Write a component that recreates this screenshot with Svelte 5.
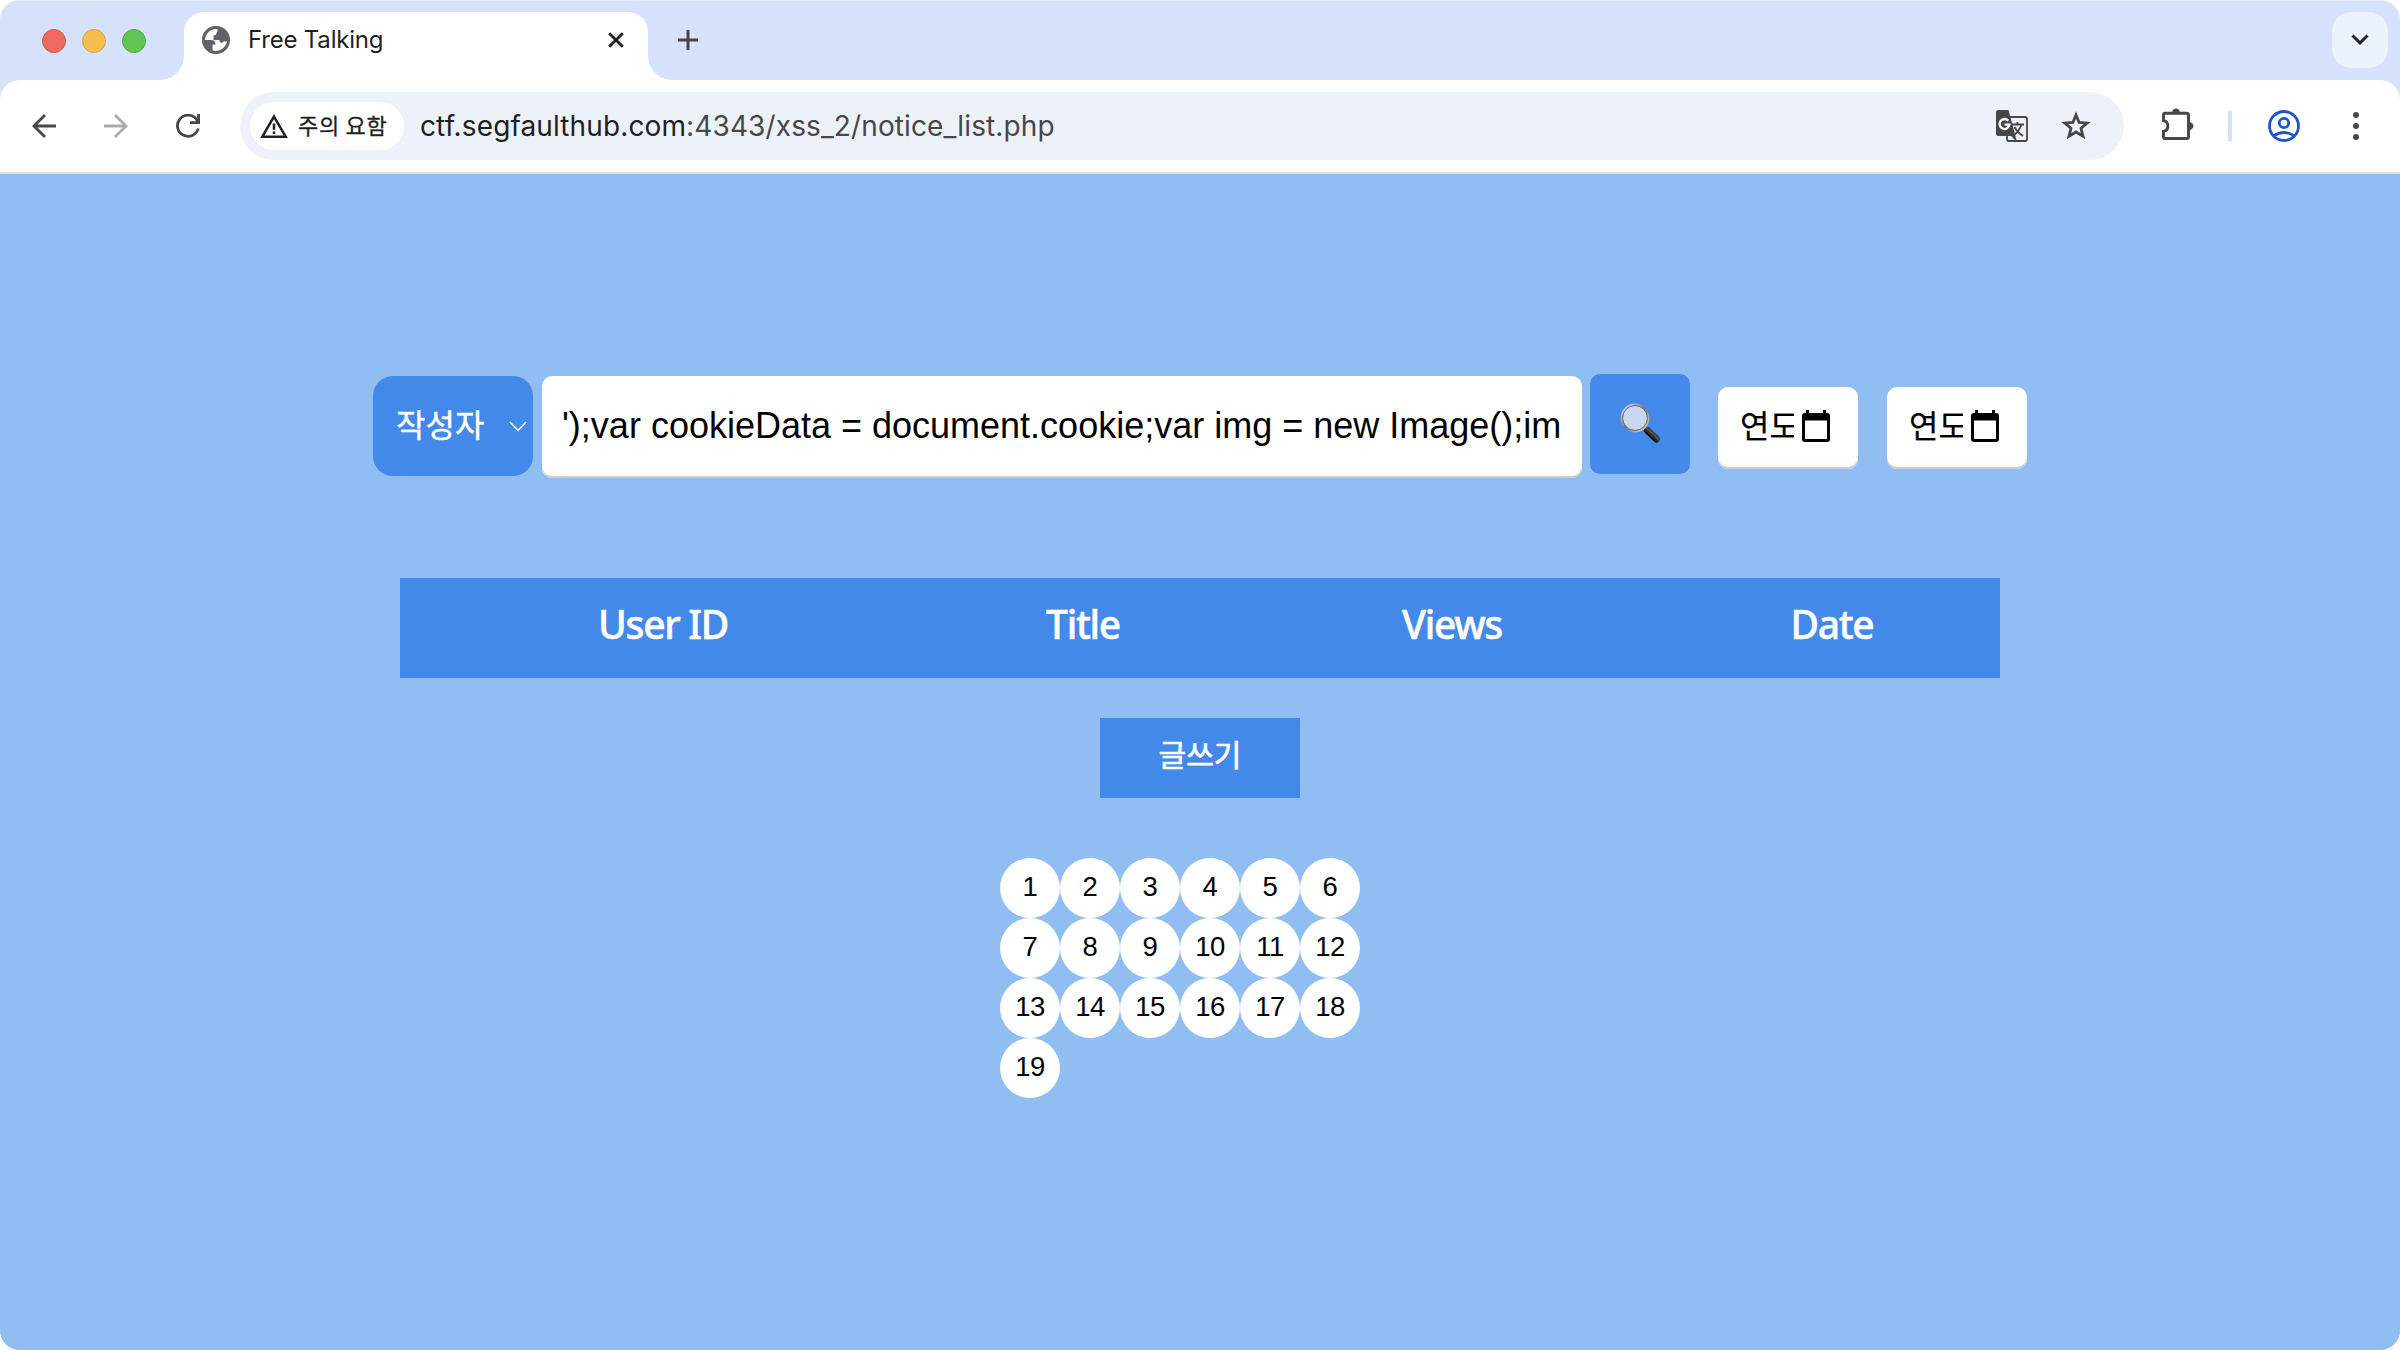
<script>
  const pages = Array.from({ length: 19 }, (_, i) => i + 1);
  const columns = ['User ID', 'Title', 'Views', 'Date'];
  const query = "');var cookieData = document.cookie;var img = new Image();im";
</script>

<div class="window">
  <header class="tabs">
    <div class="lights"><i class="red"></i><i class="yellow"></i><i class="green"></i></div>
    <div class="tab">
      <svg class="globe" viewBox="0 0 28 28" width="28" height="28">
        <circle cx="14" cy="14" r="14" fill="#5f6368" />
        <path d="M15.500 3C9.500 2.300 4.300 6.300 3.200 12.300L3 14H9Q13.500 14 13.500 18.500H10.500V24.600C17.500 26.300 24 21.500 25 15.500H21.500Q20 18 17.500 15.500V14H11.500V10.500Q11.500 8.800 14 8.800Q14.500 6 15.500 5.200Z" fill="#fff" />
      </svg>
      <span class="tab-title">Free Talking</span>
      <svg class="close" viewBox="0 0 16 16" width="16" height="16"><path d="M1.200 1.200 14.800 14.800M14.800 1.200 1.200 14.800" stroke="#1f1f1f" stroke-width="2.800" /></svg>
    </div>
    <svg class="plus" viewBox="0 0 20 20" width="20" height="20"><path d="M10 0V20M0 10H20" stroke="#474747" stroke-width="3" /></svg>
    <div class="tab-menu">
      <svg viewBox="0 0 18 12" width="18" height="12"><path d="M1.500 1.500 9 9 16.500 1.500" fill="none" stroke="#1f1f1f" stroke-width="3" /></svg>
    </div>
  </header>

  <nav class="toolbar">
    <svg class="back" viewBox="0 0 24 24" width="24" height="24"><path d="M24 12H2M13 1 2 12 13 23" fill="none" stroke="#474747" stroke-width="2.800" /></svg>
    <svg class="forward" viewBox="0 0 24 24" width="24" height="24"><path d="M0 12H22M11 1 22 12 11 23" fill="none" stroke="#ababab" stroke-width="2.800" /></svg>
    <svg class="reload" viewBox="0 0 24 24" width="24" height="24"><path d="M22.300 14.500A10.600 10.600 0 1 1 20.500 5.300L22.500 7.700" fill="none" stroke="#474747" stroke-width="2.800" /><path d="M22.600 0V8.600H14" fill="none" stroke="#474747" stroke-width="2.800" /></svg>
    <div class="omnibox">
      <div class="chip">
        <svg viewBox="0 0 28 24" width="28" height="24"><path d="M14 2.600 25.700 22.700H2.300Z" fill="none" stroke="#1f1f1f" stroke-width="2.500" /><path d="M14 9.500V15.700M14 17.500V20" stroke="#1f1f1f" stroke-width="2.500" /></svg>
        <span>주의 요함</span>
      </div>
      <span class="url"><b>ctf.segfaulthub.com</b>:4343/xss_2/notice_list.php</span>
      <svg class="translate" viewBox="0 0 32 32" width="32" height="32">
        <rect x="11" y="7" width="20" height="24" rx="2" fill="none" stroke="#474747" stroke-width="1.800" />
        <path d="M2.500 0H12.500L21 32L15 26H2.500A2.500 2.500 0 0 1 0 23.500V2.500A2.500 2.500 0 0 1 2.500 0Z" fill="#474747" />
        <path d="M12.300 10.700A5 5 0 1 0 13.500 14.700H8.600" fill="none" stroke="#fff" stroke-width="2.300" />
        <path d="M16 14.500H28M21.500 12V14.500M25.500 14.500Q23 21.500 18 25M18.500 17Q21 22 27 26" fill="none" stroke="#474747" stroke-width="1.800" />
      </svg>
      <svg class="star" viewBox="0 0 30 30" width="30" height="30"><path d="M15 4 18.100 11.500 26.200 12.100 20 17.300 22 25.300 15 21 8 25.300 10 17.300 3.800 12.100 11.900 11.500Z" fill="none" stroke="#474747" stroke-width="2.800" /></svg>
    </div>
    <svg class="puzzle" viewBox="0 0 32 32" width="32" height="32"><path d="M3 5.300H25A1.500 1.500 0 0 1 26.500 6.800V29A1.500 1.500 0 0 1 25 30.500H3A1.500 1.500 0 0 1 1.500 29V23.300A5.400 5.400 0 0 0 1.500 12.700V6.800A1.500 1.500 0 0 1 3 5.300Z" fill="none" stroke="#474747" stroke-width="2.900" /><path d="M10 5A4 4.500 0 0 1 18 5ZM27 14A4.500 4 0 0 1 27 22Z" fill="#474747" /></svg>
    <i class="divider"></i>
    <svg class="person" viewBox="0 0 32 32" width="32" height="32" fill="none" stroke="#1f55c8" stroke-width="2.800"><circle cx="16" cy="16" r="14.500" /><circle cx="16" cy="13" r="4.700" /><path d="M5.500 26Q16 19 26.500 26" /></svg>
    <div class="dots"><i></i><i></i><i></i></div>
  </nav>

  <main>
    <form class="search" onsubmit={(e) => e.preventDefault()}>
      <div class="select"><span>작성자</span><svg viewBox="0 0 18 11" width="18" height="11"><path d="M1 1 9 9.500 17 1" fill="none" stroke="#fff" stroke-width="1.500" /></svg></div>
      <div class="query"><span>{query}</span></div>
      <button class="go" aria-label="Search">
        <svg viewBox="0 0 42 42" width="42" height="42">
          <defs>
            <linearGradient id="rim" x1="0" y1="0" x2="1" y2="1"><stop offset="0" stop-color="#e8e8e8" /><stop offset=".5" stop-color="#777" /><stop offset="1" stop-color="#ddd" /></linearGradient>
            <linearGradient id="handle" x1="0" y1="1" x2="1" y2="0"><stop offset=".25" stop-color="#000" /><stop offset=".6" stop-color="#555" /><stop offset="1" stop-color="#111" /></linearGradient>
          </defs>
          <path d="M22.500 23.500 27 28" stroke="#777" stroke-width="4" />
          <path d="M27.500 27.500 36.500 36" stroke="url(#handle)" stroke-width="7" stroke-linecap="round" />
          <circle cx="15" cy="15" r="13.300" fill="#c8d8f1" stroke="url(#rim)" stroke-width="2.200" />
          <circle cx="15" cy="15" r="12.400" fill="none" stroke="#555" stroke-width=".8" />
        </svg>
      </button>
      {#each [0, 1] as field (field)}
        <div class="date">
          <span>연도</span>
          <svg viewBox="0 0 30 32" width="30" height="32"><path d="M4 3H26A3 3 0 0 1 29 6V29A3 3 0 0 1 26 32H4A3 3 0 0 1 1 29V6A3 3 0 0 1 4 3ZM4 10.500V29H26V10.500Z" fill="#000" fill-rule="evenodd" /><path d="M6.500 0V5M23.500 0V5" stroke="#000" stroke-width="3" /></svg>
        </div>
      {/each}
    </form>

    <div class="table">
      {#each columns as column}<div class="th">{column}</div>{/each}
    </div>
    <button class="write">글쓰기</button>
    <div class="pages">
      {#each pages as page}<span>{page}</span>{/each}
    </div>
  </main>
</div>

<style>
  :global(body) { background: #fff; }
  * { box-sizing: border-box; }
  svg, i { display: block; flex: none; }
  button { border: 0; padding: 0; font: inherit; }
  .window {
    width: 2400px; height: 1350px; display: flex; flex-direction: column; overflow: hidden;
    border-radius: 20px; background: #d6e1fb; font-family: Inter, "Noto Sans CJK KR", sans-serif; white-space: nowrap;
  }
  .tabs { height: 80px; flex: none; display: flex; align-items: flex-start; padding: 12px 12px 0 42px; box-shadow: inset 0 1px #eaf0fc; }
  .lights { display: flex; gap: 16px; padding-top: 17px; width: 142px; }
  .lights i { width: 24px; height: 24px; border-radius: 50%; border: 1px solid #d5574e; background: #ec6a5e; }
  .lights .yellow { background: #f4bf4f; border-color: #d8a243; }
  .lights .green { background: #61c554; border-color: #51a73f; }
  .tab { position: relative; width: 464px; height: 68px; background: #fff; border-radius: 20px 20px 0 0; display: flex; align-items: center; padding: 0 24px 12px 18px; }
  .tab::before, .tab::after { content: ''; position: absolute; bottom: 0; width: 24px; height: 24px; }
  .tab::before { right: 100%; background: radial-gradient(circle at 0 0, transparent 23.500px, #fff 24px); }
  .tab::after { left: 100%; background: radial-gradient(circle at 100% 0, transparent 23.500px, #fff 24px); }
  .tab-title { margin: -2px 0 0 18px; font-size: 24px; color: #1f1f1f; flex: 1; letter-spacing: -.2px; }
  .plus { margin: 18px 0 0 30px; }
  .tab-menu { margin-left: auto; width: 56px; height: 56px; border-radius: 19px; background: #ecf2fc; display: grid; place-items: center; }
  .toolbar { height: 94px; flex: none; display: flex; align-items: center; background: #fff; border-radius: 20px 20px 0 0; border-bottom: 2px solid #dfe3e1; padding: 0 41px 0 32px; }
  .forward, .reload { margin-left: 48px; }
  .omnibox { margin-left: 40px; width: 1884px; height: 68px; border-radius: 34px; background: #edf2fa; display: flex; align-items: center; padding: 0 33px 0 10px; }
  .chip { width: 154px; height: 48px; border-radius: 24px; background: #fff; display: flex; align-items: center; padding-left: 10px; color: #1f1f1f; font: 22px "Noto Sans CJK KR", sans-serif; }
  .chip span { margin: -4px 0 0 10px; letter-spacing: .7px; -webkit-text-stroke: .3px #1f1f1f; }
  .url { margin-left: 16px; font-size: 28px; color: #474747; flex: 1; letter-spacing: .12px; }
  .url b { font-weight: 400; color: #1f1f1f; }
  .star { margin-left: 33px; }
  .puzzle { margin: -4px 0 0 38px; }
  .divider { width: 4px; height: 32px; border-radius: 2px; background: #d3e1fb; margin-left: 34px; }
  .person { margin-left: 36px; }
  .dots { margin-left: auto; display: grid; gap: 5px; }
  .dots i { width: 6px; height: 6px; border-radius: 50%; background: #474747; }
  main { flex: 1; background: #90bdf2; display: flex; flex-direction: column; align-items: center; }
  .search { margin-top: 200px; width: 1654px; height: 104px; display: flex; align-items: flex-start; }
  .select { margin-top: 2px; width: 160px; height: 100px; border-radius: 20px; background: #4389e9; color: #fff; display: flex; align-items: center; justify-content: space-between; padding: 0 6px 0 23px; font-size: 32px; }
  .select span { margin-top: -6px; -webkit-text-stroke: .4px #fff; }
  .query { margin: 2px 0 0 9px; width: 1040px; height: 102px; border-radius: 10px; background: #fff; box-shadow: inset 0 -2px #ccc; padding: 0 20px; font: 36px/100px "Liberation Sans", sans-serif; }
  .query span { display: block; overflow: hidden; }
  .go { margin-left: 8px; width: 100px; height: 100px; border-radius: 10px; background: #4389e9; display: flex; align-items: flex-start; padding: 29px 0 0 30px; }
  .date { margin: 13px 0 0 28px; width: 140px; height: 82px; border-radius: 10px; background: #fff; box-shadow: inset 0 -2px #ccc; display: flex; align-items: center; padding: 0 0 4px 22px; font-size: 32px; color: #000; }
  .date + .date { margin-left: 29px; }
  .date span { width: 54px; overflow: hidden; margin: -5px 7px 0 0; -webkit-text-stroke: .2px #000; }
  .table { margin-top: 100px; width: 1600px; height: 100px; background: #4389e9; display: grid; grid-template-columns: 526px 314px 424px 336px; color: #fff; }
  .th { text-align: center; font: 500 39px/92px "Noto Sans", sans-serif; letter-spacing: -1.300px; -webkit-text-stroke: .5px #fff; }
  .write { margin-top: 40px; width: 200px; height: 80px; background: #4389e9; color: #fff; font-size: 30px; padding-bottom: 11px; -webkit-text-stroke: .7px #fff; }
  .pages { margin-top: 60px; width: 400px; display: grid; grid-template-columns: repeat(6, 60px); }
  .pages span { width: 60px; height: 60px; border-radius: 50%; background: #fff; color: #000; text-align: center; font: 27.500px/58px "Liberation Sans", sans-serif; letter-spacing: -.5px; }
</style>
